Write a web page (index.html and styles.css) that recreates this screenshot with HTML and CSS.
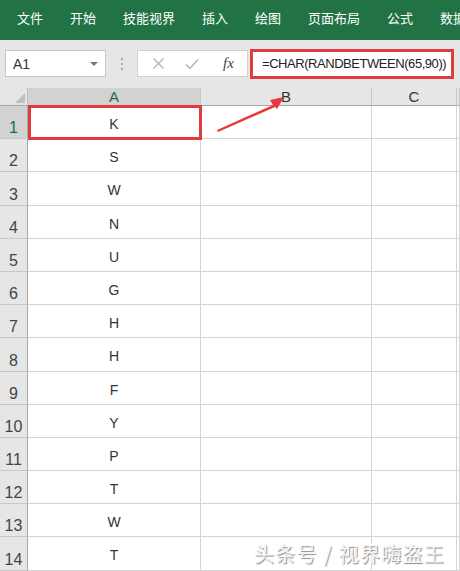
FILE: index.html
```html
<!DOCTYPE html>
<html lang="zh">
<head>
    <meta charset="UTF-8">
    <title>CHAR RANDBETWEEN</title>
    <link rel="stylesheet" href="styles.css">
</head>
<body>

<!-- 功能区选项卡 -->
<div class="ribbon">
    <span>文件</span>
    <span>开始</span>
    <span>技能视界</span>
    <span>插入</span>
    <span>绘图</span>
    <span>页面布局</span>
    <span>公式</span>
    <span>数据</span>
</div>

<!-- 名称框 + 编辑栏 -->
<div class="toolbar">
    <div class="namebox">
        <span>A1</span>
        <span class="caret"></span>
    </div>
    <div class="dots"><i></i><i></i><i></i></div>
    <div class="fxbox">
        <svg width="13" height="13" viewBox="0 0 13 13"><path d="M1.5 1.5 L11.5 11.5 M11.5 1.5 L1.5 11.5" stroke="#b4b4b4" stroke-width="1.4" fill="none"/></svg>
        <svg width="14" height="12" viewBox="0 0 14 12"><path d="M1 6.5 L5 10.5 L13 1.5" stroke="#b4b4b4" stroke-width="1.5" fill="none"/></svg>
        <span class="fx">fx</span>
    </div>
    <div class="formula">=CHAR(RANDBETWEEN(65,90))</div>
</div>

<!-- 工作表 -->
<div class="sheet">
    <div class="grid" id="grid">
        <div class="corner"><span class="tri"></span></div>
        <div class="colhead active">A</div>
        <div class="colhead">B</div>
        <div class="colhead">C</div>
        <div class="colhead"></div>
    </div>

    <svg class="arrow" width="80" height="45" viewBox="0 0 80 45">
        <polygon points="2,36 58,11 55,6 69,3 62,15 60,13 3,38" fill="#e8383d"/>
    </svg>

    <div class="mark">头条号 / 视界嗨盗王</div>
</div>

<script>
    // 每行随机字母（截图中的结果）
    const letras = ["K", "S", "W", "N", "U", "G", "H", "H", "F", "Y", "P", "T", "W", "T"];
    const grid = document.getElementById("grid");

    letras.forEach((letra, i) => {
        const num = document.createElement("div");
        num.className = "rowhead" + (i === 0 ? " active" : "");
        num.textContent = i + 1;
        grid.appendChild(num);

        const a = document.createElement("div");
        a.className = "cell a" + (i === 0 ? " sel" : "");
        a.textContent = letra;
        grid.appendChild(a);

        for (let k = 0; k < 3; k++) {
            const c = document.createElement("div");
            c.className = "cell";
            grid.appendChild(c);
        }
    });
</script>

</body>
</html>
```

FILE: styles.css
```css
body {
    margin: 0;
    font-family: "Liberation Sans", "Noto Sans CJK SC", sans-serif;
    background-color: #fff;
    width: 460px;
    height: 571px;
    overflow: hidden;
}
.ribbon {
    height: 40px;
    background-color: #217346;
    display: flex;
    align-items: center;
    gap: 27px;
    padding-left: 17px;
    padding-bottom: 5px;
    box-sizing: border-box;
    color: #fff;
    font-family: "Noto Sans CJK SC", sans-serif;
    font-size: 13px;
    white-space: nowrap;
    overflow: hidden;
}
.toolbar {
    height: 48px;
    background-color: #e6e6e6;
    display: flex;
    align-items: flex-start;
    padding-top: 10px;
    box-sizing: border-box;
}
.namebox {
    margin-left: 5px;
    width: 101px;
    height: 27px;
    background: #fff;
    border: 1px solid #c6c6c6;
    box-sizing: border-box;
    display: flex;
    align-items: center;
    justify-content: space-between;
    padding: 0 7px 0 7px;
    font-size: 14px;
    color: #333;
}
.caret {
    width: 0;
    height: 0;
    border-left: 4px solid transparent;
    border-right: 4px solid transparent;
    border-top: 4px solid #777;
}
.dots {
    width: 31px;
    height: 27px;
    display: flex;
    flex-direction: column;
    align-items: center;
    justify-content: center;
    gap: 3px;
}
.dots i {
    width: 2px;
    height: 2px;
    background: #a8a8a8;
}
.fxbox {
    width: 111px;
    height: 27px;
    background: #fff;
    border: 1px solid #d0d0d0;
    box-sizing: border-box;
    display: flex;
    align-items: center;
    padding-left: 14px;
    gap: 20px;
}
.fxbox .fx {
    font-family: "Liberation Serif", serif;
    font-style: italic;
    font-size: 15px;
    color: #444;
    margin-left: 4px;
}
.formula {
    margin-left: 2px;
    margin-top: -1px;
    width: 204px;
    height: 30px;
    border: 3px solid #e23b3e;
    box-sizing: border-box;
    background: #fff;
    font-size: 13px;
    letter-spacing: -0.45px;
    color: #222;
    padding-left: 9px;
    line-height: 23px;
    white-space: nowrap;
}
.sheet {
    position: relative;
}
.grid {
    display: grid;
    grid-template-columns: 28px 173px 171px 85px 3px;
    grid-template-rows: 18px repeat(14, 33.2px);
}
.corner {
    background: #e6e6e6;
    border-right: 1px solid #bdbdbd;
    border-bottom: 1px solid #a8a8a8;
    position: relative;
}
.tri {
    position: absolute;
    right: 2px;
    bottom: 2px;
    width: 0;
    height: 0;
    border-left: 10px solid transparent;
    border-bottom: 10px solid #c0c0c0;
}
.colhead {
    background: #e6e6e6;
    border-right: 1px solid #c8c8c8;
    border-bottom: 1px solid #a8a8a8;
    text-align: center;
    font-size: 15px;
    line-height: 18px;
    color: #333;
}
.colhead.active {
    background: #d2d2d2;
    color: #1e6b40;
}
.rowhead {
    background: #e6e6e6;
    border-right: 1px solid #a8a8a8;
    border-bottom: 1px solid #c8c8c8;
    font-size: 16px;
    color: #444;
    display: flex;
    align-items: flex-end;
    justify-content: center;
    padding-bottom: 1px;
}
.rowhead.active {
    background: #d2d2d2;
    color: #1e6b40;
}
.cell {
    border-right: 1px solid #d4d4d4;
    border-bottom: 1px solid #d4d4d4;
}
.cell.a {
    text-align: center;
    font-size: 14px;
    color: #333;
    line-height: 37px;
}
.cell.sel {
    position: relative;
}
.cell.sel::after {
    content: "";
    position: absolute;
    left: 0;
    top: -1px;
    right: -2px;
    bottom: -2px;
    border: 3px solid #e23b3e;
}
.arrow {
    position: absolute;
    left: 215px;
    top: 6px;
}
.mark {
    position: absolute;
    left: 254px;
    top: 451px;
    font-family: "Noto Sans CJK SC", sans-serif;
    font-size: 20px;
    letter-spacing: 1.3px;
    color: #f6f6f6;
    text-shadow: 1px 1px 1px #8a8a8a, -1px -1px 0 #ffffff;
    white-space: nowrap;
}
```
